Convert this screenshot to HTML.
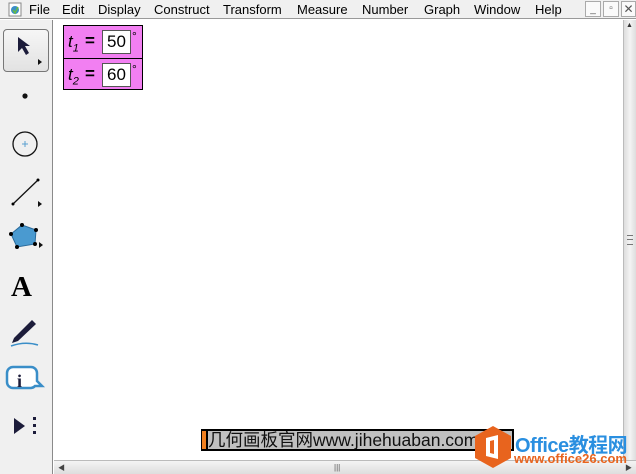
<!DOCTYPE html>
<html><head><meta charset="utf-8"><style>
*{margin:0;padding:0;box-sizing:border-box}
body{width:636px;height:474px;overflow:hidden;background:#fff;font-family:"Liberation Sans","Noto Sans CJK SC",sans-serif;position:relative}
.menu{position:absolute;left:0;top:0;width:636px;height:19px;background:#f0f0f0;border-bottom:1px solid #999;font-size:13px;color:#000}
.menu span{position:absolute;top:2px}
.tb{position:absolute;left:0;top:20px;width:53px;height:454px;background:#f0f0f0;border-right:1px solid #8a8a8a}
.canvas{position:absolute;left:54px;top:20px;width:569px;height:440px;background:#fff}
.vs{position:absolute;left:623px;top:20px;width:13px;height:440px;background:linear-gradient(90deg,#ddd,#f4f4f4,#ddd);border-left:1px solid #bbb}
.hs{position:absolute;left:54px;top:460px;width:582px;height:14px;background:linear-gradient(#f4f4f4,#ddd);border-top:1px solid #bbb}
.box{position:absolute;left:63px;top:25px;width:80px;height:65px;border:1px solid #000;background:#f27ff2}
.row{height:31.5px;position:relative;font-size:17px;font-weight:bold}
.row+.row{border-top:1px solid #000}
.val{position:absolute;left:38px;top:4px;width:29px;height:24px;background:#fff;border:1px solid #555;font-weight:normal;font-size:17px;text-align:center;line-height:22px}
.icon{position:absolute}
</style></head><body>
<div class="menu">
<svg style="position:absolute;left:8px;top:2px" width="14" height="15"><rect x="1" y="1" width="12" height="13" fill="#fff" stroke="#888"/><circle cx="7" cy="8" r="4" fill="#3a8ec8"/><path d="M5 8 l2 3 l3-6" stroke="#6b4" fill="none" stroke-width="1.5"/></svg>
<span style="left:29px">File</span><span style="left:62px">Edit</span><span style="left:98px">Display</span><span style="left:154px">Construct</span><span style="left:223px">Transform</span><span style="left:297px">Measure</span><span style="left:362px">Number</span><span style="left:424px">Graph</span><span style="left:474px">Window</span><span style="left:535px">Help</span>
<div style="position:absolute;left:585px;top:1px;width:16px;height:16px;border:1px solid #aaa;background:#fafafa;font-size:10px;text-align:center;line-height:16px;color:#555">_</div>
<div style="position:absolute;left:603px;top:1px;width:16px;height:16px;border:1px solid #aaa;background:#fafafa;font-size:10px;text-align:center;line-height:14px;color:#555">▫</div>
<div style="position:absolute;left:621px;top:1px;width:15px;height:16px;border:1px solid #aaa;background:#fafafa;font-size:12px;text-align:center;line-height:14px;color:#555">✕</div>
</div>
<div class="tb">
<div style="position:absolute;left:3px;top:9px;width:46px;height:43px;border:1px solid #777;border-radius:4px;background:linear-gradient(#f6f6f6,#e2e2e2)"></div>
<svg class="icon" style="left:13px;top:14px" width="36" height="36"><path d="M5 3 L5 18 L9 14 L13 21 L16 19 L12 12 L17 12 Z" fill="#1c1c3a"/><path d="M25 25 L29 28 L25 31Z" fill="#111"/></svg>
<svg class="icon" style="left:0;top:72px" width="53" height="280">
<circle cx="25" cy="4" r="2.6" fill="#111"/>
<circle cx="25" cy="52" r="12" fill="none" stroke="#111" stroke-width="1.3"/><path d="M22 52h6M25 49v6" stroke="#5aa0d0"/>
<path d="M13 112 L38 88" stroke="#111" stroke-width="1.3"/><circle cx="13" cy="112" r="1.5"/><circle cx="38" cy="88" r="1.5"/><path d="M38 109l4 3-4 3z" fill="#111"/>
<path d="M22 133 L36 138 L35 152 L17 155 L11 142 Z" fill="#4a9ad0" stroke="#2a6a9a"/><circle cx="22" cy="133" r="2"/><circle cx="36" cy="138" r="2"/><circle cx="35" cy="152" r="2"/><circle cx="17" cy="155" r="2"/><circle cx="11" cy="142" r="2"/><path d="M39 150l4 3-4 3z" fill="#111"/>
<text x="11" y="204" font-family="Liberation Serif" font-weight="bold" font-size="29" fill="#000">A</text>
<path d="M14 246 L32 228 L36 232 L18 249 L12 251Z" fill="#1c1c3a"/><path d="M11 254 Q25 249 38 253" stroke="#3a8ec8" fill="none" stroke-width="1.5"/>
</svg>
<svg class="icon" style="left:5px;top:344px" width="45" height="90">
<path d="M8 3 h18 a6 6 0 0 1 6 6 v8 l5 5 l-7 0 a6 6 0 0 1 -4 2 h-18 a6 6 0 0 1 -6 -6 v-9 a6 6 0 0 1 6 -6z" fill="#fff" stroke="#3a8ec8" stroke-width="2.5"/>
<text x="12" y="23" font-family="Liberation Serif" font-weight="bold" font-size="18" fill="#1c1c3a">i</text>
<path d="M9 54 L20 62 L9 70Z" fill="#1c1c3a"/><rect x="28" y="53" width="3" height="3" fill="#1c1c3a"/><rect x="28" y="60" width="3" height="3" fill="#1c1c3a"/><rect x="28" y="67" width="3" height="3" fill="#1c1c3a"/>
</svg>
</div>
<div class="canvas"></div>
<div class="box">
<div class="row"><span style="position:absolute;left:4px;top:6px;font-style:italic;font-weight:normal">t<sub style="font-size:11px">1</sub></span><span style="position:absolute;left:21px;top:5px">=</span><div class="val">50</div><span style="position:absolute;left:68px;top:3px;font-size:12px;font-weight:normal">°</span></div>
<div class="row"><span style="position:absolute;left:4px;top:6px;font-style:italic;font-weight:normal">t<sub style="font-size:11px">2</sub></span><span style="position:absolute;left:21px;top:5px">=</span><div class="val">60</div><span style="position:absolute;left:68px;top:3px;font-size:12px;font-weight:normal">°</span></div>
</div>
<div class="vs"><div style="position:absolute;left:3px;top:215px;width:6px;height:10px;border-top:1px solid #777;border-bottom:1px solid #777"><div style="margin-top:3px;border-top:1px solid #777"></div></div><div style="position:absolute;left:2px;top:2px;font-size:7px;color:#333">▲</div></div>
<div class="hs"><div style="position:absolute;left:280px;top:2px;font-size:8px;color:#555">|||</div><div style="position:absolute;left:4px;top:2px;font-size:7px;color:#444">◀</div><div style="position:absolute;right:4px;top:2px;font-size:7px;color:#444">▶</div></div>
<div style="position:absolute;left:201px;top:429px;width:313px;height:22px;background:#000"></div>
<div style="position:absolute;left:202px;top:431px;width:4px;height:18px;background:#f08020"></div>
<div style="position:absolute;left:208px;top:431px;width:304px;height:18px;background:#c0c0c0;font-size:17.5px;line-height:18px;color:#111;white-space:nowrap;overflow:hidden">几何画板官网www.jihehuaban.com.cn</div>
<svg style="position:absolute;left:473px;top:424px" width="40" height="46"><path d="M20 2 L38 12 L38 34 L20 44 L2 34 L2 12Z" fill="#e8641e"/><path d="M13 14 L25 11 L25 35 L13 32Z M17 17 v12 l4 1 v-14z" fill="#fff" fill-rule="evenodd"/></svg>
<div style="position:absolute;left:515px;top:429px;font-size:20px;font-weight:bold;color:#2a8fe0;white-space:nowrap;letter-spacing:-0.5px">Office<span style="font-family:'Noto Sans CJK SC',sans-serif">教程网</span></div>
<div style="position:absolute;left:514px;top:451px;font-size:13px;font-weight:bold;color:#e8641e">www.office26.com</div>
</body></html>
